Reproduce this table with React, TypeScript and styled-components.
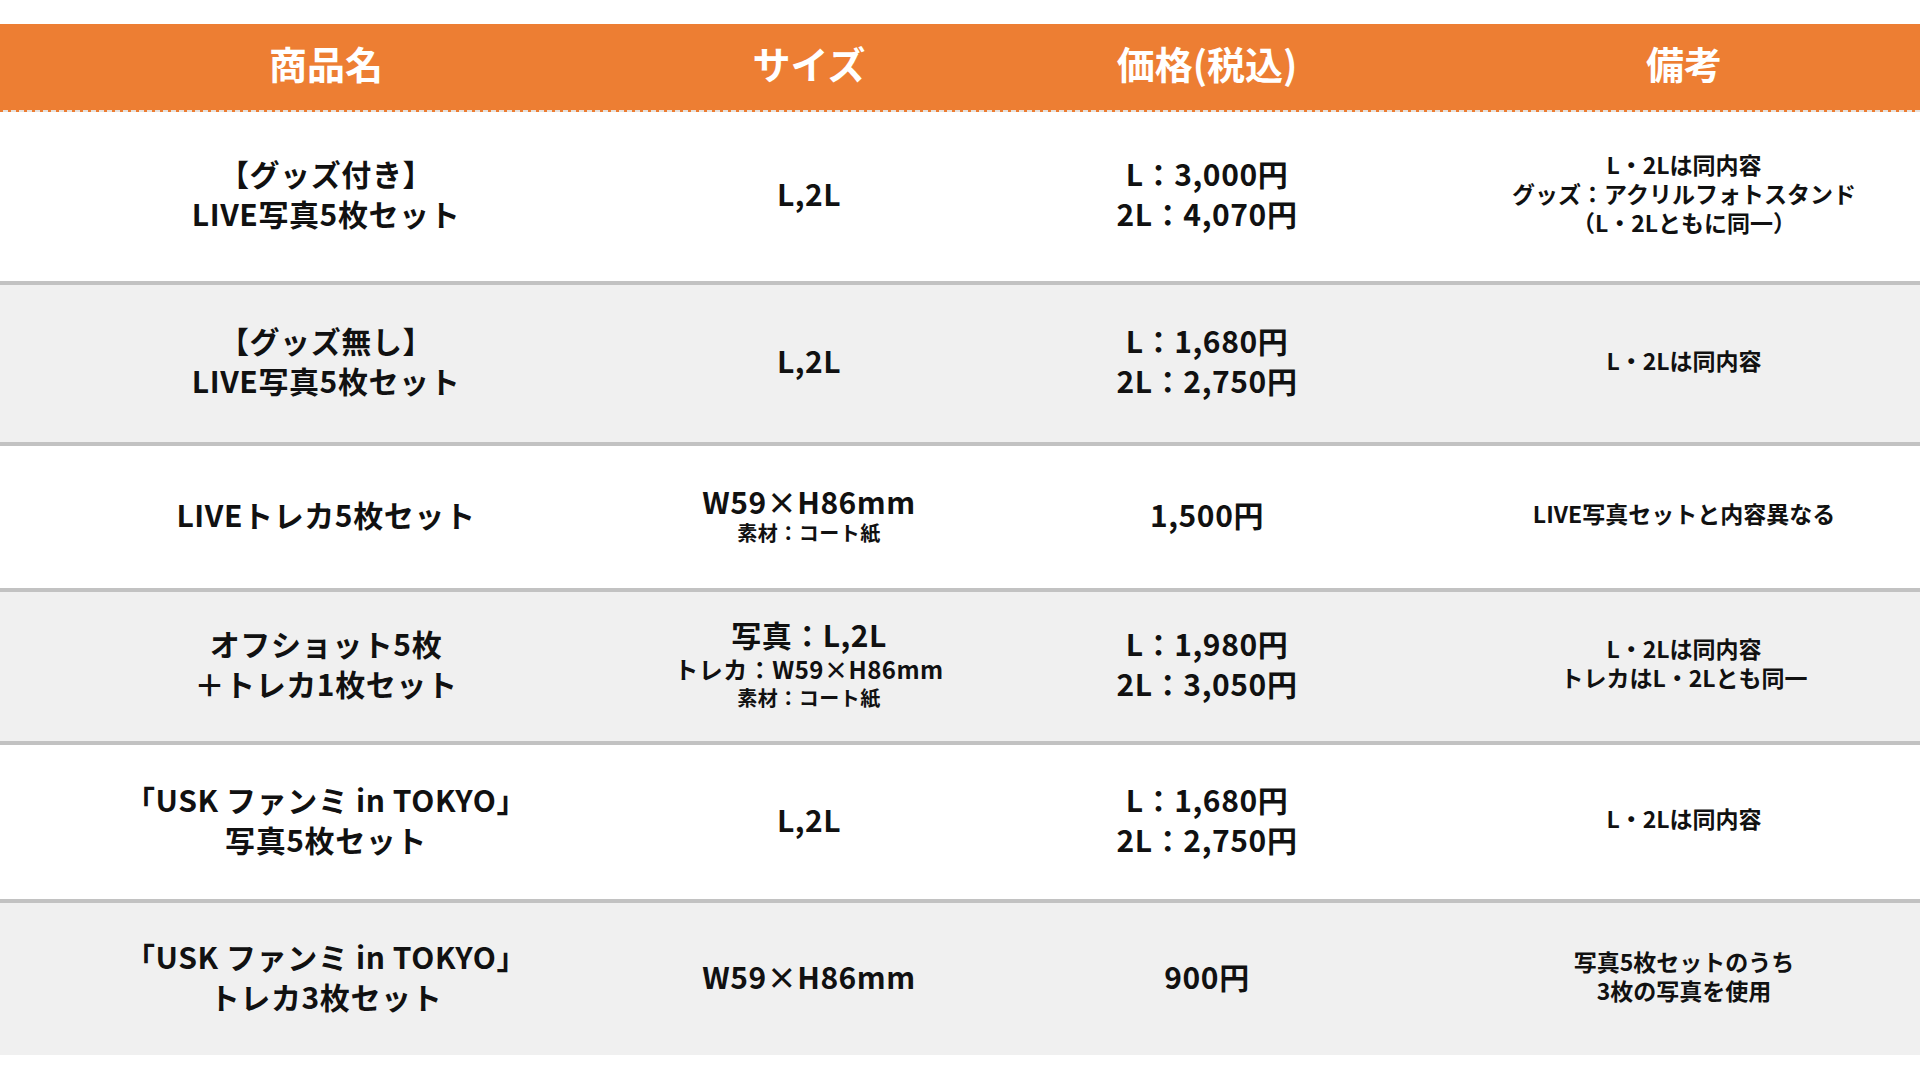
import * as React from 'react';
import styled, { createGlobalStyle } from 'styled-components';

const GlobalStyle = createGlobalStyle`
  html, body {
    margin: 0;
    padding: 0;
    background: #ffffff;
  }
  body {
    font-family: "Noto Sans CJK JP", "Noto Sans", sans-serif;
    color: #111111;
  }
  * {
    box-sizing: border-box;
  }
`;

const columns = "652px 314px 482px 1fr";

const Page = styled.div`
  width: 1920px;
  height: 1080px;
  padding-top: 24px;
  overflow: hidden;
`;

const HeaderRow = styled.div`
  display: grid;
  grid-template-columns: ${columns};
  height: 86px;
  background: #ed7e33;
`;

const HeaderRule = styled.div`
  height: 2px;
  background: repeating-linear-gradient(90deg, #ed7e33 0 3px, #e6e2de 3px 8px);
`;

const HeaderCell = styled.div`
  display: flex;
  align-items: center;
  justify-content: center;
  color: #ffffff;
  font-size: 38px;
  font-weight: 700;
  padding-bottom: 10px;
`;

const Row = styled.div<{ $shade: boolean; $height: number; $divider: boolean }>`
  display: grid;
  grid-template-columns: ${columns};
  height: ${p => p.$height}px;
  background: ${p => (p.$shade ? '#f0f0f0' : '#ffffff')};
  border-bottom: ${p => (p.$divider ? '4px solid #c2c2c2' : 'none')};
`;

const Cell = styled.div`
  display: flex;
  flex-direction: column;
  align-items: center;
  justify-content: center;
  text-align: center;
  font-weight: 700;
  padding-bottom: 7px;
`;

const Main = styled.div`
  font-size: 30px;
  line-height: 40px;
  letter-spacing: 0.6px;
  white-space: nowrap;
`;

const SizeLine = styled.div<{ $size: number; $lh: number }>`
  font-size: ${p => p.$size}px;
  line-height: ${p => p.$lh}px;
  letter-spacing: 0.5px;
  white-space: nowrap;
`;

const Note = styled.div`
  font-size: 23px;
  line-height: 29px;
  white-space: nowrap;
`;

type SizeSpec = { text: string; size: number; lh: number };

type Item = {
  name: string[];
  size: SizeSpec[];
  price: string[];
  note: string[];
  height: number;
};

const big = (text: string): SizeSpec => ({ text, size: 30, lh: 38 });
const mid = (text: string): SizeSpec => ({ text, size: 24, lh: 32 });
const small = (text: string): SizeSpec => ({ text, size: 20, lh: 26 });

const items: Item[] = [
  {
    name: ['【グッズ付き】', 'LIVE写真5枚セット'],
    size: [big('L,2L')],
    price: ['L：3,000円', '2L：4,070円'],
    note: ['L・2Lは同内容', 'グッズ：アクリルフォトスタンド', '（L・2Lともに同一）'],
    height: 173,
  },
  {
    name: ['【グッズ無し】', 'LIVE写真5枚セット'],
    size: [big('L,2L')],
    price: ['L：1,680円', '2L：2,750円'],
    note: ['L・2Lは同内容'],
    height: 161,
  },
  {
    name: ['LIVEトレカ5枚セット'],
    size: [big('W59×H86mm'), small('素材：コート紙')],
    price: ['1,500円'],
    note: ['LIVE写真セットと内容異なる'],
    height: 146,
  },
  {
    name: ['オフショット5枚', '＋トレカ1枚セット'],
    size: [big('写真：L,2L'), mid('トレカ：W59×H86mm'), small('素材：コート紙')],
    price: ['L：1,980円', '2L：3,050円'],
    note: ['L・2Lは同内容', 'トレカはL・2Lとも同一'],
    height: 153,
  },
  {
    name: ['「USK ファンミ in TOKYO」', '写真5枚セット'],
    size: [big('L,2L')],
    price: ['L：1,680円', '2L：2,750円'],
    note: ['L・2Lは同内容'],
    height: 158,
  },
  {
    name: ['「USK ファンミ in TOKYO」', 'トレカ3枚セット'],
    size: [big('W59×H86mm')],
    price: ['900円'],
    note: ['写真5枚セットのうち', '3枚の写真を使用'],
    height: 152,
  },
];

export default function App() {
  return (
    <>
      <GlobalStyle />
      <Page>
        <HeaderRow>
          <HeaderCell>商品名</HeaderCell>
          <HeaderCell>サイズ</HeaderCell>
          <HeaderCell>価格(税込)</HeaderCell>
          <HeaderCell>備考</HeaderCell>
        </HeaderRow>
        <HeaderRule />
        {items.map((item, i) => (
          <Row key={i} $shade={i % 2 === 1} $height={item.height} $divider={i < items.length - 1}>
            <Cell>
              {item.name.map(line => <Main key={line}>{line}</Main>)}
            </Cell>
            <Cell>
              {item.size.map(s => (
                <SizeLine key={s.text} $size={s.size} $lh={s.lh}>{s.text}</SizeLine>
              ))}
            </Cell>
            <Cell>
              {item.price.map(line => <Main key={line}>{line}</Main>)}
            </Cell>
            <Cell>
              {item.note.map(line => <Note key={line}>{line}</Note>)}
            </Cell>
          </Row>
        ))}
      </Page>
    </>
  );
}
